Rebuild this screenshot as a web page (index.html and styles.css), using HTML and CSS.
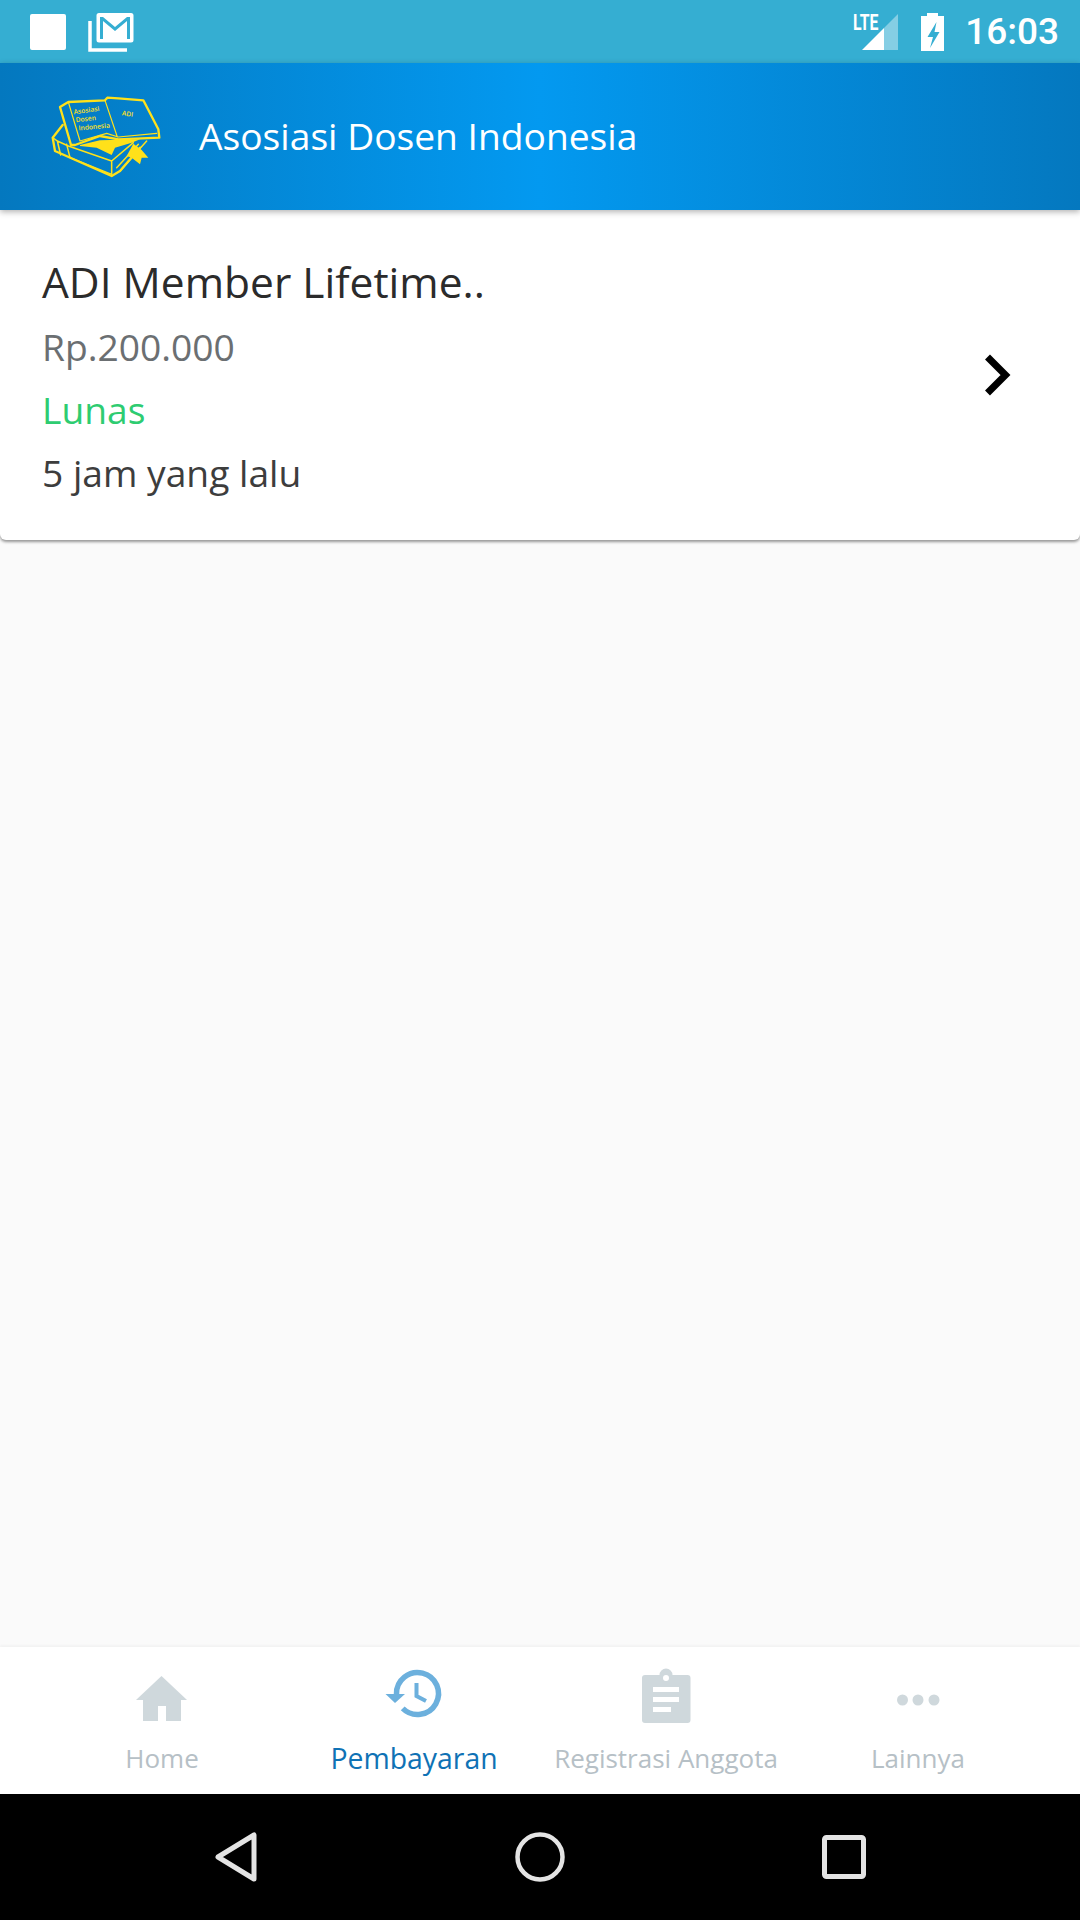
FILE: index.html
```html
<!DOCTYPE html>
<html lang="id">
<head>
    <meta charset="UTF-8">
    <meta name="viewport" content="width=device-width, initial-scale=1.0">
    <title>Asosiasi Dosen Indonesia</title>
    <link rel="stylesheet" href="styles.css">
</head>
<body>
    <div class="phone">
        <div class="status-bar">
            <div class="status-left">
                <span class="status-square"></span>
                <svg class="status-mail" width="46" height="40" viewBox="0 0 46 40">
                    <path d="M2 9v29h37" fill="none" stroke="#fff" stroke-width="3.5"/>
                    <path fill="#fff" fill-rule="evenodd" d="M11 1h32a2.500 2.500 0 0 1 2.500 2.500V28a2.500 2.500 0 0 1-2.500 2.500H11A2.500 2.500 0 0 1 8.500 28V3.500A2.500 2.500 0 0 1 11 1zM12 5v22h3V9l12 10L39 9v18h3V5h-3L27 15 15 5z"/>
                </svg>
            </div>
            <div class="status-right">
                <div class="signal">
                    <span class="lte">LTE</span>
                    <svg width="36" height="36" viewBox="0 0 36 36">
                        <path fill="#fff" fill-opacity="0.4" d="M36 0v36H22V14z"/>
                        <path fill="#fff" d="M22 36H0l22-22z"/>
                    </svg>
                </div>
                <svg class="battery" width="23" height="38" viewBox="0 0 23 38">
                    <path fill="#fff" fill-rule="evenodd" d="M6 0h11v3h6v35H0V3h6zM15.500 9L6.500 24h5.500l-3 11 9.500-16h-5z"/>
                </svg>
                <span class="clock">16:03</span>
            </div>
        </div>

        <header class="app-bar">
            <svg class="logo" width="112" height="82" viewBox="150 285 336 246">
                <g fill="none" stroke="#ffe11a" stroke-linejoin="round" stroke-linecap="round">
                    <path stroke-width="7" d="M180 318l25-15 110-5 7-8 33 2 75 6 45 87 3 25-123 5-55-10-75 27h-12z"/>
                    <path stroke-width="3.500" d="M205 303l35 117 80-23 35 11 115-11M315 298l37 110"/>
                    <path stroke-width="7" d="M188 372l-30 38 7 40 170 75 25-15 60-70"/>
                    <path stroke-width="4.500" d="M158 410l14 10 33 15 130 45v45M172 420l10 42M200 430l10 40 125 50M335 480l65-55M350 500l65-70M360 510l80-90"/>
                </g>
                <path fill="#ffe11a" d="M240 432l60-14 120-3-25 10-50 15-10 22-45-22-50-5z"/>
                <path fill="#ffe11a" d="M400 428l25 19 20 23h-20l-5 20-25-20-15-5z"/>
                <text class="logo-text" x="222" y="340" transform="rotate(-8 222 340)">Asosiasi</text>
                <text class="logo-text" x="228" y="364" transform="rotate(-7 228 364)">Dosen</text>
                <text class="logo-text" x="236" y="388" transform="rotate(-5 236 388)">Indonesia</text>
                <text class="logo-text" x="365" y="343" transform="rotate(8 365 343)">ADI</text>
            </svg>
            <h1 class="app-title">Asosiasi Dosen Indonesia</h1>
        </header>

        <main class="content">
            <div class="pay-card">
                <div class="pay-info">
                    <div class="pay-name">ADI Member Lifetime..</div>
                    <div class="pay-price">Rp.200.000</div>
                    <div class="pay-status">Lunas</div>
                    <div class="pay-time">5 jam yang lalu</div>
                </div>
                <svg class="chevron" width="28" height="42" viewBox="0 0 28 42">
                    <path d="M3.500 3l18 18-18 18" fill="none" stroke="#000" stroke-width="7"/>
                </svg>
            </div>
        </main>

        <nav class="tabs">
            <div class="tab">
                <svg class="tab-icon" width="60" height="60" viewBox="0 0 60 60">
                    <path fill="#cfd8dc" d="M29.500 9L4 33h7v21h15V39h8v15h15V33h6z"/>
                </svg>
                <span class="tab-label">Home</span>
            </div>
            <div class="tab tab-active">
                <svg class="tab-icon" width="60" height="60" viewBox="0 0 60 60">
                    <path fill="none" stroke="#6cb0dd" stroke-width="5.500" d="M12.500 27A21 21 0 1 1 18.700 41.400"/>
                    <path fill="#6cb0dd" d="M1.500 27H21l-10 9z"/>
                    <path fill="none" stroke="#6cb0dd" stroke-width="4" d="M32.500 16v13l9.500 5"/>
                </svg>
                <span class="tab-label">Pembayaran</span>
            </div>
            <div class="tab">
                <svg class="tab-icon" width="60" height="60" viewBox="0 0 60 60">
                    <path fill="#cfd8dc" fill-rule="evenodd" d="M23.500 8a6.500 6.500 0 0 1 13 0h15a3 3 0 0 1 3 3v42a3 3 0 0 1-3 3H9a3 3 0 0 1-3-3V11a3 3 0 0 1 3-3zM30 8a3 3 0 1 0 0 6 3 3 0 0 0 0-6zM17 20v5h26v-5zM17 30v5h26v-5zM17 40v5h18v-5z"/>
                </svg>
                <span class="tab-label">Registrasi Anggota</span>
            </div>
            <div class="tab">
                <svg class="tab-icon" width="60" height="60" viewBox="0 0 60 60">
                    <circle cx="14.500" cy="33" r="5.500" fill="#cfd8dc"/>
                    <circle cx="30" cy="33" r="5.500" fill="#cfd8dc"/>
                    <circle cx="46" cy="33" r="5.500" fill="#cfd8dc"/>
                </svg>
                <span class="tab-label">Lainnya</span>
            </div>
        </nav>

        <div class="nav-bar">
            <svg width="42" height="50" viewBox="0 0 42 50">
                <path d="M39 3v44L3 25z" fill="none" stroke="#e4e4e4" stroke-width="5" stroke-linejoin="round"/>
            </svg>
            <svg width="50" height="50" viewBox="0 0 50 50">
                <circle cx="25" cy="25" r="22.500" fill="none" stroke="#e4e4e4" stroke-width="4.500"/>
            </svg>
            <svg width="44" height="44" viewBox="0 0 44 44">
                <rect x="2.500" y="2.500" width="39" height="39" rx="2" fill="none" stroke="#e4e4e4" stroke-width="5"/>
            </svg>
        </div>
    </div>
</body>
</html>
```
FILE: styles.css
```css
* {
    box-sizing: border-box;
}
body {
    margin: 0;
    font-family: "Open Sans", sans-serif;
    background-color: #000;
}
.phone {
    width: 1080px;
    height: 1920px;
    display: flex;
    flex-direction: column;
}
.status-bar {
    height: 63px;
    background-color: #35aed2;
    display: flex;
    justify-content: space-between;
    align-items: center;
    padding: 0 21px 0 30px;
}
.status-left {
    display: flex;
    align-items: center;
    gap: 22px;
}
.status-square {
    width: 36px;
    height: 36px;
    background-color: #fff;
    border-radius: 2px;
}
.status-right {
    display: flex;
    align-items: center;
}
.signal {
    position: relative;
    width: 36px;
    height: 36px;
    margin-right: 23px;
}
.signal svg {
    display: block;
}
.lte {
    position: absolute;
    left: -9px;
    top: -3px;
    font-family: "Roboto", sans-serif;
    font-size: 22px;
    line-height: 24px;
    font-weight: 700;
    color: #fff;
    transform: scaleX(0.72);
    transform-origin: left top;
}
.clock {
    font-family: "Roboto", sans-serif;
    font-size: 37px;
    font-weight: 500;
    color: #fff;
    margin-left: 21px;
}
.app-bar {
    height: 147px;
    background: linear-gradient(90deg, #0478bf 0%, #0399f0 50%, #0478bf 100%);
    display: flex;
    align-items: center;
    padding-left: 50px;
    position: relative;
    box-shadow: 0 2px 6px rgba(0, 0, 0, 0.3);
}
.logo-text {
    font-family: "Open Sans", sans-serif;
    font-size: 20px;
    font-weight: 600;
    fill: #ffe11a;
}
.app-title {
    margin: 0 0 3px 37px;
    font-size: 37.200px;
    font-weight: 400;
    color: #fff;
}
.content {
    flex: 1;
    background-color: #fafafa;
}
.pay-card {
    height: 330px;
    background-color: #fff;
    border-radius: 0 0 6px 6px;
    box-shadow: 0 2px 3px rgba(0, 0, 0, 0.4);
    display: flex;
    justify-content: space-between;
    align-items: center;
    padding: 0 68px 0 42px;
}
.pay-info {
    padding-top: 2px;
}
.pay-name {
    font-size: 42.500px;
    line-height: 67px;
    color: #2b2b2b;
}
.pay-price,
.pay-status,
.pay-time {
    font-size: 37.200px;
    line-height: 63px;
}
.pay-price {
    color: #6b6f72;
}
.pay-status {
    color: #2ecc71;
}
.pay-time {
    color: #3d3d3d;
}
.tabs {
    height: 147px;
    background-color: #fff;
    box-shadow: 0 -2px 2px rgba(0, 0, 0, 0.03);
    display: flex;
    padding: 0 36px;
}
.tab {
    width: 252px;
    display: flex;
    flex-direction: column;
    align-items: center;
    padding-top: 20px;
}
.tab-label {
    font-size: 26px;
    line-height: 36px;
    margin-top: 13px;
    color: #b6c0c6;
    white-space: nowrap;
}
.tab-active .tab-label {
    font-size: 28.400px;
    color: #0f72b5;
}
.nav-bar {
    height: 126px;
    background-color: #000;
    display: flex;
    justify-content: space-between;
    align-items: center;
    padding: 0 214px 0 215px;
}
```
